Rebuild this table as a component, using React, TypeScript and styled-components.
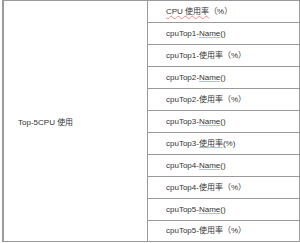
import React from "react";
import styled, { createGlobalStyle } from "styled-components";

const GlobalStyle = createGlobalStyle`
  html, body {
    margin: 0;
    padding: 0;
    background: #ffffff;
  }
  body {
    font-family: "Liberation Sans", "Noto Sans CJK SC", sans-serif;
  }
`;

type Mark = "none" | "spell" | "grammar";

interface IRow {
  prefix: string;
  marked: string;
  suffix: string;
  mark: Mark;
}

const rows: IRow[] = [
  { prefix: "", marked: "CPU 使用率", suffix: "（%）", mark: "spell" },
  { prefix: "cpuTop1-", marked: "Name", suffix: "()", mark: "grammar" },
  { prefix: "cpuTop1-使用率（%）", marked: "", suffix: "", mark: "none" },
  { prefix: "cpuTop2-", marked: "Name", suffix: "()", mark: "grammar" },
  { prefix: "cpuTop2-使用率（%）", marked: "", suffix: "", mark: "none" },
  { prefix: "cpuTop3-", marked: "Name", suffix: "()", mark: "grammar" },
  { prefix: "cpuTop3-", marked: "使用率", suffix: "(%)", mark: "grammar" },
  { prefix: "cpuTop4-", marked: "Name", suffix: "()", mark: "grammar" },
  { prefix: "cpuTop4-使用率（%）", marked: "", suffix: "", mark: "none" },
  { prefix: "cpuTop5-", marked: "Name", suffix: "()", mark: "grammar" },
  { prefix: "cpuTop5-使用率（%）", marked: "", suffix: "", mark: "none" },
];

const App: React.FC = () => {
  return (
    <>
      <GlobalStyle />
      <Sheet>
        <tbody>
          {rows.map((row, i) => (
            <tr key={i}>
              {i === 0 && (
                <GroupCell rowSpan={rows.length}>Top-5CPU 使用</GroupCell>
              )}
              <ItemCell $last={i === rows.length - 1}>
                {row.prefix}
                {row.marked && <Flag $mark={row.mark}>{row.marked}</Flag>}
                {row.suffix}
              </ItemCell>
            </tr>
          ))}
        </tbody>
      </Sheet>
    </>
  );
};

export default App;

const Sheet = styled.table`
  margin-left: 2px;
  width: 298px;
  border-collapse: collapse;
  table-layout: fixed;
  border-left: 2px solid #9a9a9a;
  border-top: 1px solid #9a9a9a;
  border-right: 1px solid #9a9a9a;
  border-bottom: 1px solid #9a9a9a;
  font-size: 8px;
  color: #333333;
`;

const GroupCell = styled.td`
  width: 129px;
  padding: 0 0 0 14px;
  border-right: 1px solid #9a9a9a;
  vertical-align: middle;
  white-space: nowrap;
`;

const ItemCell = styled.td<{ $last: boolean }>`
  height: ${(p) => (p.$last ? "20px" : "21px")};
  padding: 0 0 0 18px;
  border-bottom: 1px solid #9a9a9a;
  vertical-align: middle;
  white-space: nowrap;
  line-height: 10px;
`;

const Flag = styled.span<{ $mark: Mark }>`
  text-decoration-line: underline;
  text-decoration-style: ${(p) => (p.$mark === "spell" ? "wavy" : "solid")};
  text-decoration-color: ${(p) =>
    p.$mark === "spell" ? "#e88a8a" : "#a9c0ee"};
  text-decoration-thickness: 1px;
  text-underline-offset: 1px;
`;
